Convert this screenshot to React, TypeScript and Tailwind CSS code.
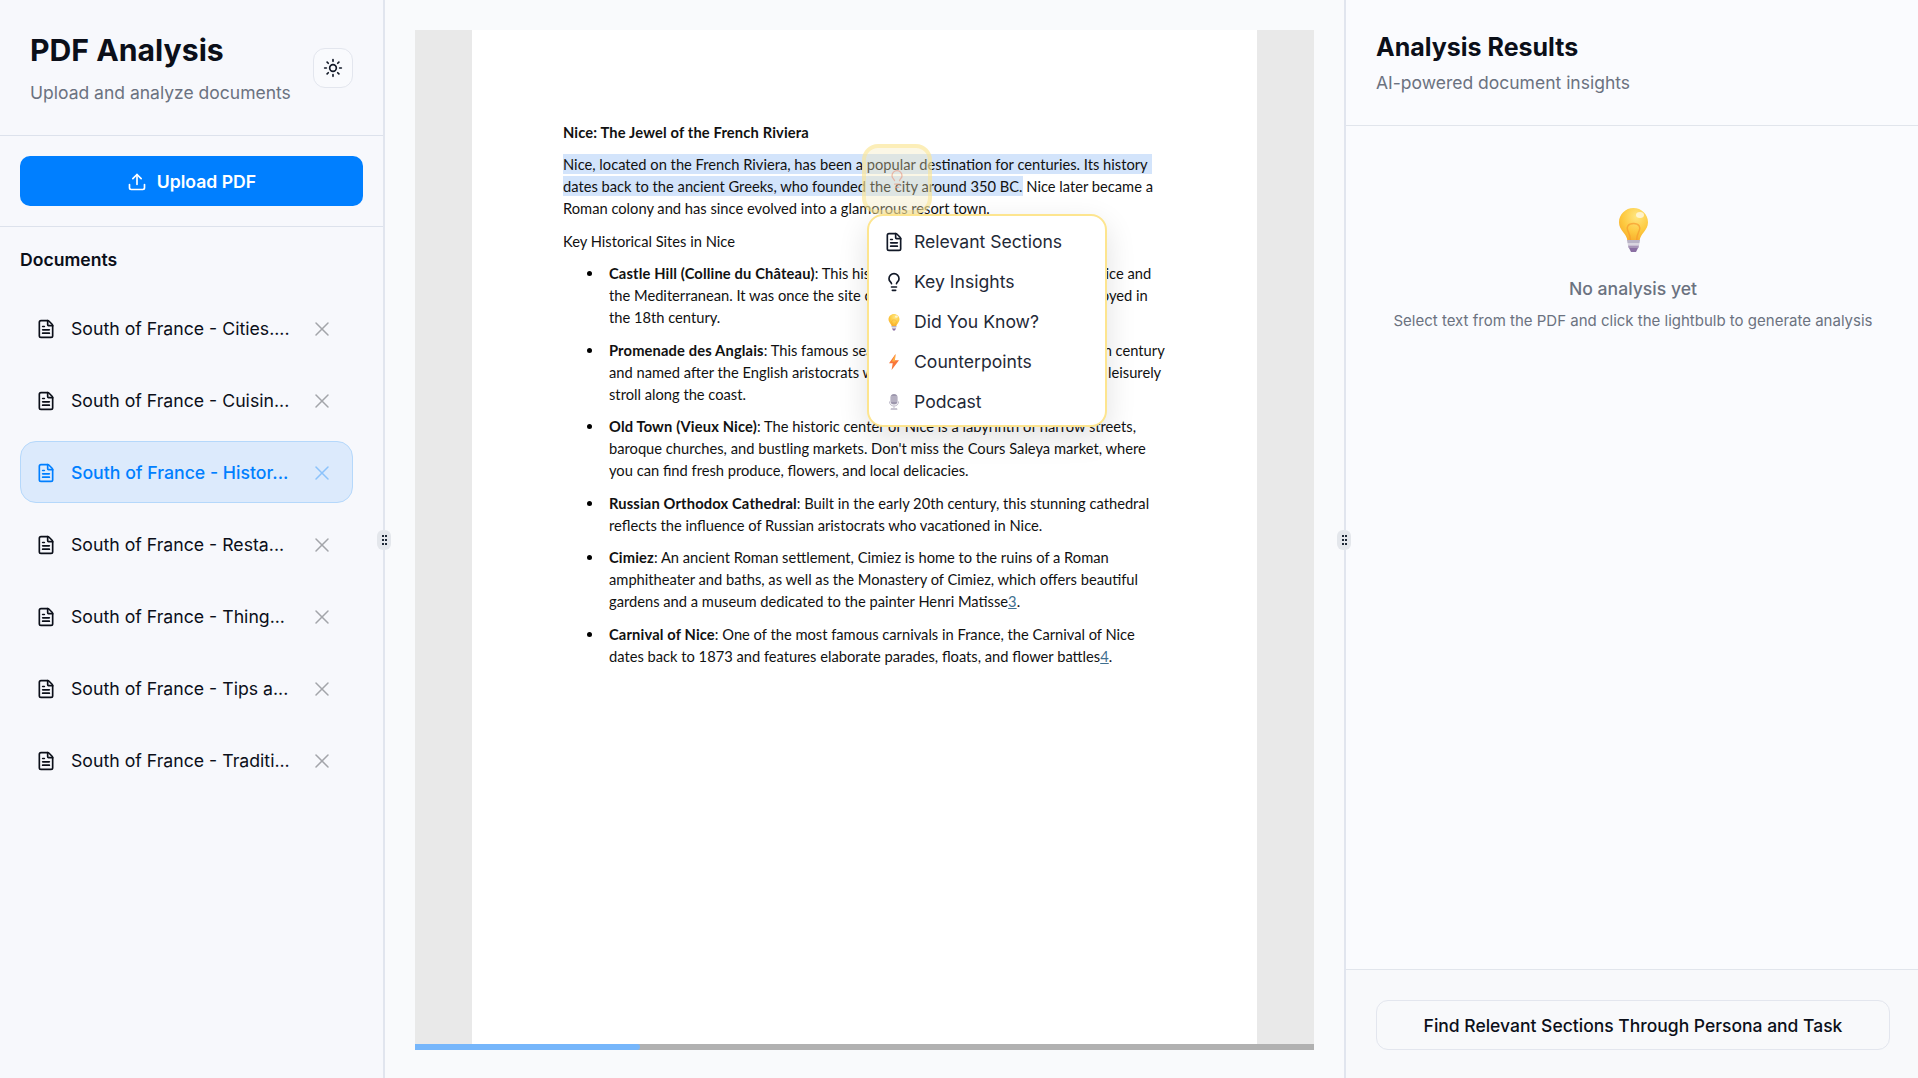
import React from "react";
import { FileText, Lightbulb, Sun, Upload, X } from "lucide-react";

const documents = [
  "South of France - Cities....",
  "South of France - Cuisin...",
  "South of France - Histor...",
  "South of France - Resta...",
  "South of France - Thing...",
  "South of France - Tips a...",
  "South of France - Traditi...",
];

const BulbEmoji = ({ className }: { className: string }) => (
  <svg viewBox="0 0 29 45" className={className}>
    <defs>
      <radialGradient id="bulbGlass" cx="0.6" cy="0.25" r="0.8">
        <stop offset="0" stopColor="#ffe680" />
        <stop offset="0.6" stopColor="#fdc93f" />
        <stop offset="1" stopColor="#f7ab2a" />
      </radialGradient>
    </defs>
    <path
      d="M14.5 0C6.5 0 0 6.3 0 14.2c0 4.3 2 7.2 4.2 10 1.900 2.400 3.800 4.800 4.300 8.800h12c.5-4 2.400-6.400 4.300-8.800 2.200-2.800 4.200-5.700 4.200-10C29 6.300 22.500 0 14.500 0Z"
      fill="url(#bulbGlass)"
    />
    <path
      d="M11.500 33c0-5-1.200-7-2.800-10.500-1.300-3-.2-7 5.800-7s7.100 4 5.800 7C18.700 26 17.500 28 17.500 33"
      fill="none"
      stroke="#f79a2e"
      strokeOpacity="0.7"
      strokeWidth="1.500"
    />
    <ellipse cx="21" cy="7" rx="4" ry="3" fill="#fff" fillOpacity="0.65" />
    <path d="M8 32h13l-.5 3H8.500Z" fill="#b9b3c6" />
    <path d="M8.500 35h12l-.5 2.500H9Z" fill="#d9d5e0" />
    <path d="M9 37.500h11l-.5 2.500H9.500Z" fill="#a795b8" />
    <path d="M10 40h9l-2 4h-5Z" fill="#8a6fa3" />
  </svg>
);

const BoltEmoji = () => (
  <svg viewBox="0 0 10 16" className="w-[10px] h-4">
    <path d="M6.500 0 0 9.200h3.700L2.600 16 10 6.300H5.900Z" fill="#f9763a" />
    <path d="M6.500 0 3 7.500h3.500L5.900 6.300Z" fill="#fdb23f" />
  </svg>
);

const MicEmoji = () => (
  <svg viewBox="0 0 10 16" className="w-[10px] h-4">
    <rect x="1.500" y="0" width="7" height="10.500" rx="3.500" fill="#9d97ad" />
    <path d="M1.500 3h7M1.500 5h7M1.500 7h7" stroke="#d8d5df" strokeWidth="0.800" />
    <path d="M.500 7.500c0 3 2 4.500 4.500 4.500s4.500-1.500 4.500-4.500" fill="none" stroke="#bcb8c8" strokeWidth="1" />
    <path d="M4.400 12h1.200v2H4.400ZM2 14h6l.5 2h-7Z" fill="#c9c6d2" />
  </svg>
);

const menuItems = [
  { label: "Relevant Sections", icon: <FileText size={20} strokeWidth={2} /> },
  { label: "Key Insights", icon: <Lightbulb size={20} strokeWidth={2} /> },
  { label: "Did You Know?", icon: <BulbEmoji className="w-3 h-[17px]" /> },
  { label: "Counterpoints", icon: <BoltEmoji /> },
  { label: "Podcast", icon: <MicEmoji /> },
];

const ResizeHandle = ({ className }: { className: string }) => (
  <div className={`absolute top-[530px] w-[14px] h-[20px] rounded-md bg-[#e4e7ec] grid grid-cols-[2px_2px] gap-x-[1px] gap-y-[2px] place-content-center ${className}`}>
    {[0, 1, 2, 3, 4, 5].map((dot) => (
      <span key={dot} className="w-[2px] h-[2px] bg-[#1f2937]" />
    ))}
  </div>
);

const Bullet = ({ lines }: { lines: React.ReactNode[] }) => (
  <li className="relative pl-[46px] mt-[10.500px]">
    <span className="absolute left-[23.500px] top-[9px] w-[5px] h-[5px] rounded-full bg-black" />
    {lines.map((line, i) => (
      <div key={i} className="h-[22px] whitespace-nowrap">
        {line}
      </div>
    ))}
  </li>
);

const Sidebar = () => (
  <aside className="w-[385px] shrink-0 h-full border-r-2 border-[#e1e5ee] bg-[#f7f8fc] flex flex-col">
    <div className="h-[136px] border-b border-[#dde2ec] pl-[30px] pr-[30px] flex items-center justify-between">
      <div>
        <h1 className="text-[30.200px] leading-[40px] font-bold text-[#0b0f19]">PDF Analysis</h1>
        <p className="text-[17.500px] leading-[26px] mt-[10px] text-[#6b7280]">Upload and analyze documents</p>
      </div>
      <button className="w-10 h-10 mt-[1px] rounded-xl border border-[#e3e6ee] bg-[#f9fafd] flex items-center justify-center text-[#111827]">
        <Sun size={20} strokeWidth={2} />
      </button>
    </div>
    <div className="h-[91px] border-b border-[#dde2ec] px-5 pt-5">
      <button className="w-[343px] h-[50px] pt-[2px] rounded-[10px] bg-[#007fff] text-white text-[17.600px] font-semibold flex items-center justify-center gap-[10px]">
        <Upload size={20} strokeWidth={2} />
        Upload PDF
      </button>
    </div>
    <div className="px-5 pt-[21px]">
      <h2 className="text-[17.600px] leading-[24px] font-semibold text-[#0b0f19]">Documents</h2>
      <ul className="mt-[25px] w-[333px] flex flex-col gap-[10px]">
        {documents.map((doc, i) => {
          const active = i === 2;
          return (
            <li
              key={doc}
              className={`h-[62px] rounded-2xl border pl-[15px] pr-[18px] pt-[2px] flex items-center gap-[15px] ${
                active ? "bg-[#dceafc] border-[#b5d8fb] text-[#007fff]" : "border-transparent text-[#0b0f19]"
              }`}
            >
              <FileText size={20} strokeWidth={2} className="shrink-0" />
              <span className={`flex-1 text-[17.700px] whitespace-nowrap ${active ? "font-medium" : ""}`}>{doc}</span>
              <X size={24} strokeWidth={1.500} className={active ? "text-[#8cc3fb]" : "text-[#a3a5aa]"} />
            </li>
          );
        })}
      </ul>
    </div>
  </aside>
);

const PdfPage = () => (
  <div className="flex-1 bg-white pl-[91px] pt-[90.700px] font-['Lato',sans-serif] text-[14.700px] leading-[22px] text-[#111]">
    <p className="font-bold tracking-[0.15px]">Nice: The Jewel of the French Riviera</p>
    <div className="mt-[10.500px]">
      <div className="h-[22px] whitespace-nowrap">
        <span className="bg-[#d3e4fb] pr-1 py-[1px]">Nice, located on the French Riviera, has been a popular destination for centuries. Its history</span>
      </div>
      <div className="h-[22px] whitespace-nowrap">
        <span className="bg-[#d3e4fb] py-[1px]">dates back to the ancient Greeks, who founded the city around 350 BC.</span> Nice later became a
      </div>
      <div className="h-[22px] whitespace-nowrap">Roman colony and has since evolved into a glamorous resort town.</div>
    </div>
    <p className="mt-[10.500px]">Key Historical Sites in Nice</p>
    <ul>
      <Bullet lines={[
        <><b className="tracking-[0.15px]">Castle Hill (Colline du Château)</b>: This historic hill offers panoramic views of Nice and</>,
        "the Mediterranean. It was once the site of a medieval castle, which was destroyed in",
        "the 18th century.",
      ]} />
      <Bullet lines={[
        <><b className="tracking-[0.15px]">Promenade des Anglais</b>: This famous seaside promenade was built in the 19th century</>,
        "and named after the English aristocrats who funded it. It's a perfect spot for a leisurely",
        "stroll along the coast.",
      ]} />
      <Bullet lines={[
        <><b className="tracking-[0.15px]">Old Town (Vieux Nice)</b>: The historic center of Nice is a labyrinth of narrow streets,</>,
        "baroque churches, and bustling markets. Don't miss the Cours Saleya market, where",
        "you can find fresh produce, flowers, and local delicacies.",
      ]} />
      <Bullet lines={[
        <><b className="tracking-[0.15px]">Russian Orthodox Cathedral</b>: Built in the early 20th century, this stunning cathedral</>,
        "reflects the influence of Russian aristocrats who vacationed in Nice.",
      ]} />
      <Bullet lines={[
        <><b className="tracking-[0.15px]">Cimiez</b>: An ancient Roman settlement, Cimiez is home to the ruins of a Roman</>,
        "amphitheater and baths, as well as the Monastery of Cimiez, which offers beautiful",
        <>gardens and a museum dedicated to the painter Henri Matisse<span className="underline text-[#3f6f8f]">3</span>.</>,
      ]} />
      <Bullet lines={[
        <><b className="tracking-[0.15px]">Carnival of Nice</b>: One of the most famous carnivals in France, the Carnival of Nice</>,
        <>dates back to 1873 and features elaborate parades, floats, and flower battles<span className="underline text-[#3f6f8f]">4</span>.</>,
      ]} />
    </ul>
  </div>
);

const PdfViewer = () => (
  <main className="flex-1 min-w-0 h-full bg-[#f9fafc] pl-[30px] pr-[30px] pt-[30px] pb-[28px]">
    <div className="relative h-full flex flex-col">
      <div className="flex-1 flex min-h-0">
        <div className="w-[57px] bg-[#e9e9e9]" />
        <PdfPage />
        <div className="w-[57px] bg-[#e9e9e9]" />
      </div>
      <div className="h-[6px] bg-[#b1b1b1]">
        <div className="w-[225px] h-full rounded-r-[3px] bg-[#76b6fb]" />
      </div>

      {/* Selection lightbulb */}
      <div className="absolute left-[447px] top-[114px] w-[70px] h-[70px] rounded-2xl border-4 border-[#fde68a]/50 bg-[#f3e9b8]/35 flex items-center justify-center">
        <Lightbulb size={20} strokeWidth={1.500} className="text-[#e9a08a]/70" />
      </div>

      {/* Analysis menu */}
      <div className="absolute left-[452px] top-[184px] w-[240px] h-[213px] rounded-2xl border-2 border-[#fde58f] bg-white shadow-[0_10px_30px_rgba(0,0,0,0.12)] pt-[6px] pl-[15px] font-['Inter',sans-serif]">
        {menuItems.map((item) => (
          <div key={item.label} className="h-10 flex items-center gap-[10px] text-[17.600px] text-[#1f2937]">
            <span className="w-5 flex justify-center text-[#111827]">{item.icon}</span>
            {item.label}
          </div>
        ))}
      </div>
    </div>
  </main>
);

const ResultsPanel = () => (
  <aside className="w-[574px] shrink-0 h-full border-l-2 border-[#e1e5ee] bg-[#fafbfe] flex flex-col">
    <div className="h-[126px] border-b border-[#e1e5ec] pl-[30px] pt-[28px]">
      <h2 className="text-[25px] leading-[38px] font-bold text-[#0b0f19]">Analysis Results</h2>
      <p className="text-[17.500px] leading-[26px] mt-[4px] text-[#6b7280]">AI-powered document insights</p>
    </div>
    <div className="flex-1 flex flex-col items-center pt-[82px] pl-[2px]">
      <BulbEmoji className="w-[29px] h-[45px]" />
      <p className="mt-[23px] text-[17.600px] leading-[26px] font-medium text-[#6b7280]">No analysis yet</p>
      <p className="mt-[7px] text-[15px] leading-[24px] text-[#6b7280]">Select text from the PDF and click the lightbulb to generate analysis</p>
    </div>
    <div className="h-[109px] border-t border-[#e1e5ec] bg-[#f8f9fb] pl-[30px] pr-[28px] pt-[30px]">
      <button className="w-full h-[50px] pt-[2px] rounded-xl border border-[#e3e6ee] text-[17.500px] font-medium text-[#0b0f19]">
        Find Relevant Sections Through Persona and Task
      </button>
    </div>
  </aside>
);

export default function App() {
  return (
    <div className="relative flex h-screen overflow-hidden font-['Inter',sans-serif]">
      <Sidebar />
      <PdfViewer />
      <ResultsPanel />
      <ResizeHandle className="left-[377px]" />
      <ResizeHandle className="left-[1337px]" />
    </div>
  );
}
